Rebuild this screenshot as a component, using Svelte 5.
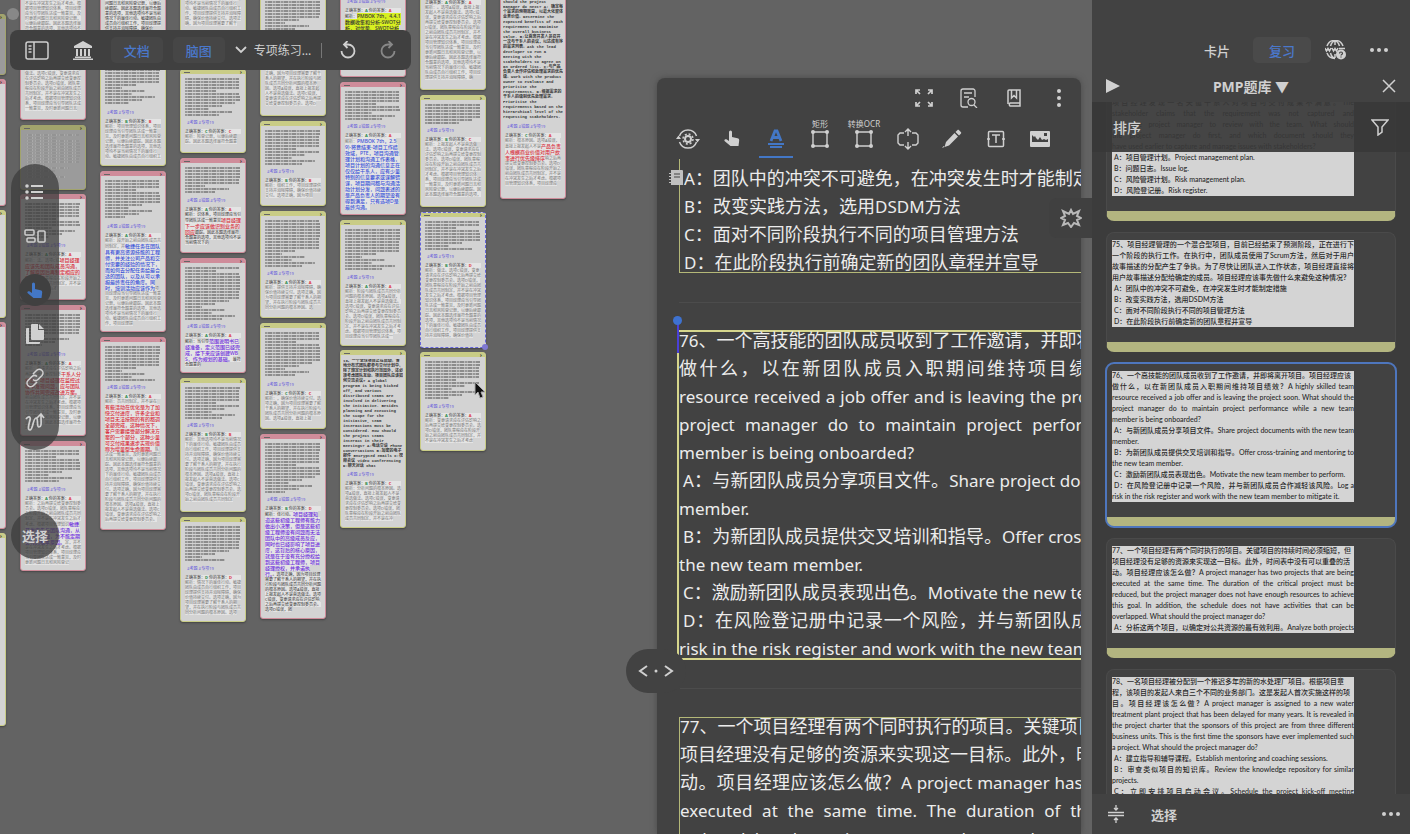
<script lang="ts">
	type Line = { text: string; fill?: boolean; option?: boolean };
	type Question = { id: number; lines: Line[] };
	type Node = {
		x: number;
		y: number;
		h: number;
		tone: string;
		sheet: number;
		wrong?: boolean;
		right?: string;
		mine?: string;
		mark?: string;
		color?: string;
		lead?: number;
		source?: string;
		dim?: boolean;
		selected?: boolean;
		strong?: boolean;
	};

	const questions: Question[] = [
		{
			id: 74,
			lines: [
				{ text: '项目经理发现一名关键干系人对项目可交付成果不满意。The', fill: true },
				{ text: 'stakeholder claims that the requirement was not captured and', fill: true },
				{ text: 'asks the project manager to review with the team. What should', fill: true },
				{ text: 'the project manager do first, and which document should they', fill: true },
				{ text: 'have used earlier to capture and manage issues with stakeholders?' },
				{ text: 'A：项目管理计划。Project management plan.', option: true },
				{ text: 'B：问题日志。Issue log.', option: true },
				{ text: 'C：风险管理计划。Risk management plan.', option: true },
				{ text: 'D：风险登记册。Risk register.', option: true }
			]
		},
		{
			id: 75,
			lines: [
				{ text: '75、项目经理管理的一个混合型项目，目前已经结束了预测阶段，正在进行下', fill: true },
				{ text: '一个阶段的执行工作。在执行中，团队成员使用了Scrum方法，然后对于用户', fill: true },
				{ text: '故事描述的分配产生了争执。为了尽快让团队进入工作状态，项目经理直接将', fill: true },
				{ text: '用户故事描述分配给确定的成员。项目经理应该事先做什么来避免这种情况？' },
				{ text: 'A：团队中的冲突不可避免，在冲突发生时才能制定措施', option: true },
				{ text: 'B：改变实践方法，选用DSDM方法', option: true },
				{ text: 'C：面对不同阶段执行不同的项目管理方法', option: true },
				{ text: 'D：在此阶段执行前确定新的团队章程并宣导', option: true }
			]
		},
		{
			id: 76,
			lines: [
				{ text: '76、一个高技能的团队成员收到了工作邀请，并即将离开项目。项目经理应该' },
				{ text: '做什么，以在新团队成员入职期间维持项目绩效？A highly skilled team', fill: true },
				{ text: 'resource received a job offer and is leaving the project soon. What should the', fill: true },
				{ text: 'project manager do to maintain project performance while a new team', fill: true },
				{ text: 'member is being onboarded?' },
				{ text: 'A：与新团队成员分享项目文件。Share project documents with the new team', fill: true, option: true },
				{ text: 'member.' },
				{ text: 'B：为新团队成员提供交叉培训和指导。Offer cross-training and mentoring to', fill: true, option: true },
				{ text: 'the new team member.' },
				{ text: 'C：激励新团队成员表现出色。Motivate the new team member to perform.', option: true },
				{ text: 'D：在风险登记册中记录一个风险，并与新团队成员合作减轻该风险。Log a', fill: true, option: true },
				{ text: 'risk in the risk register and work with the new team member to mitigate it.' }
			]
		},
		{
			id: 77,
			lines: [
				{ text: '77、一个项目经理有两个同时执行的项目。关键项目的持续时间必须缩短，但' },
				{ text: '项目经理没有足够的资源来实现这一目标。此外，时间表中没有可以重叠的活' },
				{ text: '动。项目经理应该怎么做？A project manager has two projects that are being', fill: true },
				{ text: 'executed at the same time. The duration of the critical project must be', fill: true },
				{ text: 'reduced, but the project manager does not have enough resources to achieve', fill: true },
				{ text: 'this goal. In addition, the schedule does not have activities that can be', fill: true },
				{ text: 'overlapped. What should the project manager do?' },
				{ text: 'A：分析这两个项目，以确定对公共资源的最有效利用。Analyze both projects', fill: true, option: true }
			]
		},
		{
			id: 78,
			lines: [
				{ text: '78、一名项目经理被分配到一个推迟多年的新的水处理厂项目。根据项目章' },
				{ text: '程，该项目的发起人来自三个不同的业务部门。这是发起人首次实施这样的项' },
				{ text: '目。项目经理该怎么做？A project manager is assigned to a new water', fill: true },
				{ text: 'treatment plant project that has been delayed for many years. It is revealed in', fill: true },
				{ text: 'the project charter that the sponsors of this project are from three different', fill: true },
				{ text: 'business units. This is the first time the sponsors have ever implemented such', fill: true },
				{ text: 'a project. What should the project manager do?' },
				{ text: 'A：建立指导和辅导课程。Establish mentoring and coaching sessions.', option: true },
				{ text: 'B：审查类似项目的知识库。Review the knowledge repository for similar', fill: true, option: true },
				{ text: 'projects.' },
				{ text: 'C：立即安排项目启动会议。Schedule the project kick-off meeting', fill: true, option: true }
			]
		}
	];

	const pages: Question[] = [
		{ id: 75, lines: questions[1].lines.slice(3) },
		questions[2],
		{ id: 77, lines: questions[3].lines.slice(0, 5) }
	];

	const note =
		'选项正确，因为项目经理需要了解干系人的期望，并在执行阶段与团队成员共同分析问题的根本原因。选项A错误，直接上报发起人不是首选做法。选项C错误，变更请求应在评估影响之后再提交给变更控制委员会。选项D错误，团队章程应在阶段开始之前由团队成员共同制定，并不是在冲突发生之后才考虑。根据项目管理知识体系，项目经理应当引导团队达成一致意见，及时更新问题日志和风险登记册，以便后续跟踪。因此本题选择最符合题意的选项，其他选项均不是当前情况下的最佳行动。敏捷团队由成员自行组织工作，项目经理提供支持并消除障碍，确保价值持续交付。';
	const longNote = note + note + note + note;

	const sourceOne =
		'should the project manager do next? A: 确定每个需求的预期效益，以最大化整体业务价值。Determine the expected benefits of each requirement to maximise the overall business value. B:让首席开发人员召开一次与干系人的会议，以达成有序的需求列表。Ask the lead developer to run a meeting with the stakeholders to agree on an ordered list. C:与产品负责人合作评估和处理需求的优先级。Work with the product owner to evaluate and prioritise the requirements. D:根据需求的干系人的级别优先处理需求。Prioritise the requirements based on the hierarchical level of the requesting stakeholders.';
	const sourceTwo =
		'19、一个全球项目正在启动。各地分布式团队都参与交付计划中。除了规定计划和执行范围外，还必须考虑团队互动。项目团队应该如何交流会议? A global program is being kicked off, and various distributed teams are involved in delivering the initiative. Besides planning and executing the scope for the initiative, team interactions must be considered. How should the project teams interact in their meetings? A:电话交谈 Phone conversations B:加密的电子邮件 Encrypted emails C:视频会议 Video conferencing D:聊天对话 Chat conversations';

	const nodes: Node[] = [
		{ x: -60, y: 14, h: 61, tone: 'green', sheet: 40, dim: true },
		{ x: -60, y: 79, h: 127, tone: 'pink', sheet: 110, dim: false },
		{ x: -60, y: 210, h: 108, tone: 'green', sheet: 90 },
		{ x: -60, y: 322, h: 207, tone: 'pink', sheet: 190 },
		{ x: -60, y: 533, h: 193, tone: 'green', sheet: 180 },
		{ x: 20, y: -60, h: 180, tone: 'pink', sheet: 20 },
		{ x: 20, y: 125, h: 65, tone: 'green', sheet: 46, dim: true },
		{ x: 20, y: 194, h: 106, tone: 'pink', sheet: 37, wrong: true, lead: 6, mark: '项目经理应该先和团队成员沟通，了解原因后再制定相应的解决方案', color: 'red' },
		{ x: 20, y: 305, h: 131, tone: 'pink', sheet: 35, wrong: true, lead: 20, mark: '干系人分析后，项目经理在监控过程中发现问题，应与团队协作共同完成改进方案。', color: 'red' },
		{ x: 20, y: 441, h: 130, tone: 'pink', sheet: 34, wrong: true, lead: 64, mark: '敏捷开发应先与团队沟通，从而发现问题，为不能定期交付的根本原因。', color: 'purple' },
		{ x: 100, y: -60, h: 100, tone: 'pink', sheet: 20, strong: true },
		{ x: 100, y: 45, h: 121, tone: 'green', sheet: 53, right: 'B', mine: 'B' },
		{ x: 100, y: 171, h: 161, tone: 'pink', sheet: 41, wrong: true, lead: 16, mark: '敏捷任务在团队具有更高资源技能的工程师，并关注公司产品和交付需要的经验的情况下，而如何去分配任务给最合适的团队，以及从可以承担最终责任的角度。同时，培训活动应该作为', color: 'blue' },
		{ x: 100, y: 337, h: 193, tone: 'pink', sheet: 36, wrong: true, lead: 10, mark: '有些活动在优化是为了加快交付进度，许多企业和项目无法按照的有的都调全部完成，这种情况下，客户需要接受部分解决方案的一个部分，这种少量可交付成果逐步实现价值称为增量型生命周期。', color: 'red' },
		{ x: 180, y: -60, h: 95, tone: 'green', sheet: 20 },
		{ x: 180, y: 69, h: 84, tone: 'green', sheet: 39, right: 'C', mine: 'C' },
		{ x: 180, y: 158, h: 95, tone: 'pink', sheet: 28, wrong: true, strong: true, lead: 20, mark: '项目经理下一步应该做识别业务的回应', color: 'red' },
		{ x: 180, y: 258, h: 115, tone: 'pink', sheet: 54, wrong: true, strong: true, lead: 3, mark: '范围说明书已经准备，定义范围已经完成，接下来应该创建WBS，作为规划的基础。', color: 'purple' },
		{ x: 180, y: 378, h: 134, tone: 'green', sheet: 33, right: 'B', mine: 'B' },
		{ x: 180, y: 517, h: 105, tone: 'green', sheet: 37, right: 'D', mine: 'D' },
		{ x: 260, y: -20, h: 136, tone: 'green', sheet: 50 },
		{ x: 260, y: 121, h: 85, tone: 'green', sheet: 36, right: 'B', mine: 'B' },
		{ x: 260, y: 211, h: 107, tone: 'green', sheet: 48 },
		{ x: 260, y: 323, h: 106, tone: 'green', sheet: 47, right: 'C', mine: 'C' },
		{ x: 260, y: 434, h: 185, tone: 'pink', sheet: 51, wrong: true, strong: true, right: 'B', mine: 'D', lead: 4, mark: '项目经理知道这些初级工程师有能力做出小决策，但是这些初级工程师没有问题而无法团队中的高级成员反应，同时也已经影响了项目进度，这背后的核心原因，就是在于没有充分授权给到这些初级工程师，项目经理授权，并承诺执行。', color: 'purple' },
		{ x: 340, y: -50, h: 127, tone: 'pink', sheet: 37, wrong: true, strong: true, mark: 'PMBOK 7th，4.4.1 数据收集和分析-SWOT分析，对优势、SWOT分析的是一个', color: 'yellow' },
		{ x: 340, y: 82, h: 133, tone: 'pink', sheet: 30, wrong: true, mark: 'PMBOK 7th，2.5 9)-将意结束-项目工作绩效域，PTE，项目沟通管理计划和沟通工作表格，项目计划的沟通信息正在仅仅给干系人，应有少量特别的信息要求或误解错误，项目期间都与沟通活动计划分发，问题表述的是产品负责人的期望没有得到满足，只有选项D是最终沟通。', color: 'blue' },
		{ x: 340, y: 220, h: 126, tone: 'green', sheet: 43 },
		{ x: 340, y: 350, h: 178, tone: 'green', sheet: 110, source: sourceTwo, right: 'B', mine: 'C' },
		{ x: 420, y: -50, h: 140, tone: 'green', sheet: 29 },
		{ x: 420, y: 95, h: 112, tone: 'green', sheet: 21, right: 'B', mine: 'C' },
		{ x: 420, y: 212, h: 136, tone: 'green', sheet: 30, right: 'B', mine: 'D', selected: true },
		{ x: 420, y: 352, h: 99, tone: 'green', sheet: 40 },
		{ x: 500, y: -9, h: 208, tone: 'pink', sheet: 121, source: sourceOne, wrong: true, right: 'C', mine: 'A', lead: 20, mark: '产品负责人根据商业价值对用户故事进行优先级排序', color: 'red' }
	];

	function stripes(node: Node, index: number): number[] {
		const count = Math.floor(node.sheet / 3);
		return Array.from({ length: count }, (_, row) => {
			const seed = (row * 7 + index * 5) % 11;
			if (row > count * 0.6) return 30 + seed * 6;
			return seed === 4 ? 55 : 96 + (seed % 4);
		});
	}

	// plain note text that still fits under the excerpt and the highlighted part
	function remainder(node: Node, index: number): string {
		const marked = Math.ceil((node.mark?.length ?? 0) / 11) * 6;
		const rows = Math.floor((node.h - node.sheet - 32 - marked) / 5);
		const length = Math.max(0, rows * 14 - (node.lead ?? 0) - 5);
		return longNote.slice(index * 9 + 40, index * 9 + 40 + length);
	}

	// Latin runs are set a step smaller than the Chinese around them
	function runs(text: string) {
		return text
			.split(/([\x20-\x7e]+)/)
			.filter(Boolean)
			.map((part) => ({ part, latin: /^[\x20-\x7e]/.test(part) }));
	}

	let selectedCard = $state(76);
	let tab = $state('复习');
</script>

{#snippet dots(vertical: boolean)}
	<svg width="20" height="20" viewBox="0 0 20 20" fill="currentColor">
		{#if vertical}
			<circle cx="10" cy="3" r="2" /><circle cx="10" cy="10" r="2" /><circle cx="10" cy="17" r="2" />
		{:else}
			<circle cx="3" cy="10" r="2" /><circle cx="10" cy="10" r="2" /><circle cx="17" cy="10" r="2" />
		{/if}
	</svg>
{/snippet}

{#snippet frame()}
	<svg width="20" height="20" viewBox="0 0 20 20" fill="none" stroke="currentColor" stroke-width="1.4">
		<path d="M3 3h14v14H3z" />
		<g fill="currentColor" stroke="none">
			<circle cx="3" cy="3" r="2" /><circle cx="17" cy="3" r="2" />
			<circle cx="3" cy="17" r="2" /><circle cx="17" cy="17" r="2" />
		</g>
	</svg>
{/snippet}

{#snippet hand()}
	<svg width="16" height="17" viewBox="0 0 16 17" fill="currentColor">
		<path d="M5 2a1.500 1.500 0 0 1 3 0v5l5.500 1.200c1.300.3 1.800 1 1.700 2.200L14.500 16H6.500L.8 11.200c-.7-.7-.5-1.400.2-1.800.6-.3 1.200-.2 1.800.2L5 11z" />
	</svg>
{/snippet}

<div class="app">
	<main class="canvas">
		{#each nodes as node, i}
			<article
				class="node {node.tone}"
				class:dim={node.dim}
				class:selected={node.selected}
				style="left: {node.x}px; top: {node.y}px; height: {node.h}px"
			>
				<div class="node-bar"><i></i><b>›</b></div>
				<div class="sheet" class:typed={node.source} style="height: {node.sheet}px">
					{#if node.source}
						{node.source}
					{:else}
						{#each stripes(node, i) as width}
							<span style="width: {width}%"></span>
						{/each}
					{/if}
				</div>
				{#if !node.dim && node.x >= 0}
					<div class="tags">#考题 {node.wrong ? '#错题 ' : ''}#专项19</div>
					<div class="answer">
						正确答案：<em class="ok">{node.right ?? 'A'}</em> 你的答案：<em>{node.mine ?? 'A'}</em>
					</div>
					<div class="note" class:strong={node.strong}>
						<span>解析：{longNote.slice(i * 9, i * 9 + (node.lead ?? 0))}</span>{#if node.mark}<mark class={node.color}>{node.mark}</mark>{/if}<span>{remainder(node, i)}</span>
					</div>
				{/if}
				{#if node.selected}<div class="node-grip"></div>{/if}
			</article>
		{/each}

		<span class="window-dot"></span>

		<nav class="top-bar">
			<div class="group wide">
				<button aria-label="侧边栏">
					<svg width="24" height="19" viewBox="0 0 24 19" fill="none" stroke="currentColor" stroke-width="1.500">
						<rect x="1" y="1" width="22" height="17" rx="2" /><path d="M9 1v17M3.500 5h3M3.500 8h3M3.500 11h3" />
					</svg>
				</button>
				<button aria-label="图书馆">
					<svg width="20" height="19" viewBox="0 0 20 19" fill="currentColor">
						<path d="M10 0 1 5v2h18V5zM3 8h2v7H3zM7 8h2v7H7zM11 8h2v7h-2zM15 8h2v7h-2zM2 15.500h16V17H2zM0 17.500h20V19H0z" />
					</svg>
				</button>
			</div>
			<div class="group">
				<button class="mode">文档</button>
				<button class="mode">脑图</button>
				<button class="title">
					<svg width="12" height="8" viewBox="0 0 12 8" fill="none" stroke="currentColor" stroke-width="1.800"><path d="m1 1 5 5 5-5" /></svg>
					专项练习…
				</button>
				<span class="rule"></span>
			</div>
			<div class="group wide">
				<button aria-label="撤销">
					<svg width="16" height="18" viewBox="0 0 16 18" fill="none" stroke="currentColor" stroke-width="1.800">
						<path d="M1.500 10a6.500 6.500 0 1 0 6.500-6.500H4M7.500 0 4 3.500 7.500 7" />
					</svg>
				</button>
				<button aria-label="重做" class="faded">
					<svg width="16" height="18" viewBox="0 0 16 18" fill="none" stroke="currentColor" stroke-width="1.800">
						<path d="M14.500 10A6.500 6.500 0 1 1 8 3.500h4M8.500 0 12 3.500 8.500 7" />
					</svg>
				</button>
			</div>
		</nav>

		<nav class="side-tools">
			<button aria-label="大纲">
				<svg width="20" height="16" viewBox="0 0 20 16" fill="currentColor">
					<circle cx="2" cy="2" r="1.800" /><circle cx="2" cy="8" r="1.800" /><circle cx="2" cy="14" r="1.800" />
					<path d="M6 1h12v2H6zM6 7h12v2H6zM6 13h12v2H6z" />
				</svg>
			</button>
			<button aria-label="布局">
				<svg width="22" height="14" viewBox="0 0 22 14" fill="none" stroke="currentColor" stroke-width="1.500">
					<rect x="1" y="1" width="9" height="5" rx="1" /><rect x="3" y="9" width="8" height="4" rx="1" /><rect x="14" y="2" width="7" height="11" rx="1" />
				</svg>
			</button>
			<button aria-label="手型" class="active">{@render hand()}</button>
			<button aria-label="复制">
				<svg width="18" height="20" viewBox="0 0 18 20" fill="currentColor">
					<path d="M6 0h6v6h6v9a1 1 0 0 1-1 1H6a1 1 0 0 1-1-1V1a1 1 0 0 1 1-1zM13 0l5 5h-5zM1 4h2v14h11v1a1 1 0 0 1-1 1H1a1 1 0 0 1-1-1V5a1 1 0 0 1 1-1z" />
				</svg>
			</button>
			<button aria-label="链接">
				<svg width="20" height="20" viewBox="0 0 20 20" fill="none" stroke="currentColor" stroke-width="1.600">
					<path d="m8 6 3.500-3.500a3.600 3.600 0 0 1 5.500 5L13 11.500a3.600 3.600 0 0 1-5 0M12 14l-3.500 3.500a3.600 3.600 0 0 1-5.500-5L7 8.500a3.600 3.600 0 0 1 5 0" />
				</svg>
			</button>
			<button aria-label="手写">
				<svg width="20" height="20" viewBox="0 0 20 20" fill="none" stroke="currentColor" stroke-width="1.700">
					<path d="M1 7c2-3 5-3 4 1S2 18 5 18s3-12 6-12 0 9 3 9 2-5 2-11M12 6l4-4 3 4" />
				</svg>
			</button>
		</nav>
		<button class="pick">选择</button>

		<section class="reader">
			<header class="reader-head">
				<div class="reader-actions">
					<button aria-label="全屏">
						<svg width="18" height="18" viewBox="0 0 18 18" fill="none" stroke="currentColor" stroke-width="1.700">
							<path d="M5 1H1v4M1 1l4 4M13 1h4v4M17 1l-4 4M5 17H1v-4M1 17l4-4M13 17h4v-4M17 17l-4-4" />
						</svg>
					</button>
					<button aria-label="查找">
						<svg width="18" height="20" viewBox="0 0 18 20" fill="none" stroke="currentColor" stroke-width="1.300">
							<path d="M15 9V3a2 2 0 0 0-2-2H3a2 2 0 0 0-2 2v14a2 2 0 0 0 2 2h5M4 5h8M4 9h5" /><circle cx="11.500" cy="14" r="3.500" /><path d="m14 17 3 3" />
						</svg>
					</button>
					<button aria-label="书签">
						<svg width="14" height="18" viewBox="0 0 14 18" fill="none" stroke="currentColor" stroke-width="1.500">
							<path d="M13 14H3a2 2 0 0 0 0 3h10V1H2a1 1 0 0 0-1 1v13M4.500 1v8L7 6.500 9.500 9V1" />
						</svg>
					</button>
					<button aria-label="更多">{@render dots(true)}</button>
				</div>
				<div class="reader-tools">
					<button aria-label="设置">
						<svg width="24" height="22" viewBox="0 0 24 22" fill="none" stroke="currentColor" stroke-width="1.500">
							<path d="M3.500 8a9 9 0 0 1 17 0M20.500 14a9 9 0 0 1-17 0" />
							<circle cx="12" cy="11" r="3" stroke-width="2" />
							<circle cx="12" cy="11" r="5" stroke-width="1.500" stroke-dasharray="2 1.930" />
							<path d="m0 11 2.500-3.500L5 11zM19 11l2.500 3.500L24 11z" fill="currentColor" stroke="none" />
						</svg>
					</button>
					<button aria-label="手">{@render hand()}</button>
					<button aria-label="高亮" class="current">
						<svg width="18" height="20" viewBox="0 0 18 20" fill="none" stroke="currentColor">
							<path d="m4 12 4-10h2l4 10M6 8.500h6" stroke-width="2.800" /><path d="M1 15h16M3 18h12" stroke-width="1.800" />
						</svg>
					</button>
					<button><small>矩形</small>{@render frame()}</button>
					<button><small>转换OCR</small>{@render frame()}</button>
					<button aria-label="扩展">
						<svg width="22" height="22" viewBox="0 0 22 22" fill="none" stroke="currentColor" stroke-width="1.400">
							<path d="M7 5H3L1 7v8l2 2h4M15 5h4l2 2v8l-2 2h-4M11 1v7M11 14v7M8 4l3-3 3 3M8 18l3 3 3-3" />
						</svg>
					</button>
					<button aria-label="画笔">
						<svg width="20" height="20" viewBox="0 0 20 20" fill="currentColor"><path d="m12.500 4 3.500 3.500-9 9-4.500 1.500L4 13zM13.500 3l1.800-1.800c.6-.6 1.200-.6 1.800 0l1.700 1.700c.6.6.6 1.200 0 1.800L17 6.500zM0 19l1.500-2 1 1z" /></svg>
					</button>
					<button aria-label="文本">
						<svg width="18" height="18" viewBox="0 0 18 18" fill="none" stroke="currentColor" stroke-width="1.500">
							<rect x="1.500" y="1.500" width="15" height="15" rx="1" /><path d="M5 5h8M9 5v8M0 9h3M15 9h3" />
						</svg>
					</button>
					<button aria-label="图片">
						<svg width="20" height="16" viewBox="0 0 20 16" fill="currentColor" fill-rule="evenodd">
							<path d="M1 0h18a1 1 0 0 1 1 1v14a1 1 0 0 1-1 1H1a1 1 0 0 1-1-1V1a1 1 0 0 1 1-1zM2 4v7h16V8l-2 1-2-1-2 1-2-3-2 3-2-2-1-2-1 1zM14 2v3h3V2z" />
						</svg>
					</button>
				</div>
			</header>
			<div class="page">
				{#each pages as page (page.id)}
					<div class="passage" class:highlighted={page.id === 76}>
						<div class="passage-text">
							{#each page.lines as line}
								<p class:fill={line.fill} class:option={line.option}>{#each runs(line.text) as run}{#if run.latin}<span>{run.part}</span>{:else}{run.part}{/if}{/each}</p>
							{/each}
						</div>
					</div>
				{/each}
			</div>
			<span class="handle"></span>
			<svg class="note-mark" width="14" height="16" viewBox="0 0 14 16" fill="currentColor">
				<path d="M2 0h11a1 1 0 0 1 1 1v14H2v-2H0v-1h2v-2H0V9h2V7H0V6h2V4H0V3h2z" /><path d="M5 4h6M5 7h6" stroke="#424242" stroke-width="1.200" />
			</svg>
			<button class="splitter" aria-label="调整宽度">
				<svg width="36" height="14" viewBox="0 0 36 14" fill="none" stroke="currentColor" stroke-width="2">
					<path d="M9 2 2 7l7 5M27 2l7 5-7 5" /><circle cx="18" cy="7" r="1.500" fill="currentColor" stroke="none" />
				</svg>
			</button>
			<button class="star" aria-label="AI">
				<svg width="22" height="20" viewBox="0 0 22 20" fill="none" stroke="currentColor" stroke-width="2">
					<path d="m11 2 2 4 6-3-2 5 4 2-4 2 2 5-5-2-3 4-3-4-5 2 2-5-4-2 4-2-2-5 6 3z" />
				</svg>
			</button>
		</section>

		<svg class="cursor" width="12" height="18" viewBox="0 0 12 18"><path d="M1 1v13l3-3 2 6 3-1-2-5h4z" fill="#111" stroke="#aaa" /></svg>
	</main>

	<aside class="panel">
		<header class="panel-tabs">
			<button class:on={tab === '卡片'} onclick={() => (tab = '卡片')}>卡片</button>
			<button class:on={tab === '复习'} onclick={() => (tab = '复习')}>复习</button>
			<button class="plain" aria-label="网页">
				<svg width="22" height="20" viewBox="0 0 22 20" fill="none" stroke="currentColor" stroke-width="1.500">
					<path d="M2 6a8.500 8.500 0 0 1 16 0M2 13a8.500 8.500 0 0 0 8 5.500M10 1v4M10 14v4M5.500 6c1-3 2.500-5 4.500-5s3.500 2 4.500 5M5.500 13c.8 3 2.500 5 4.500 5M0 8l1.500 3L3 8.500 4.500 11 6 8M7 8l1.500 3L10 8.500l1.500 2.500L13 8M14 8.500h6" />
					<circle cx="16" cy="14.500" r="5" fill="currentColor" stroke="none" />
					<path d="M14.500 13.500c0-2 3-2 3 0 0 1-1.500 1-1.500 2M16 16.500v1" stroke="#424242" stroke-width="1.200" />
				</svg>
			</button>
			<button class="plain" aria-label="更多">{@render dots(false)}</button>
		</header>
		<div class="panel-title">
			<button aria-label="播放"><svg width="14" height="14" viewBox="0 0 14 14" fill="currentColor"><path d="M0 0v14l14-7z" /></svg></button>
			<button class="deck">PMP题库 ▼</button>
			<button aria-label="关闭"><svg width="14" height="14" viewBox="0 0 14 14" stroke="currentColor" stroke-width="1.500"><path d="m1 1 12 12M13 1 1 13" /></svg></button>
		</div>
		<div class="deck-list">
			<div class="sort-bar">
				<span>排序</span>
				<button aria-label="筛选">
					<svg width="18" height="18" viewBox="0 0 18 18" fill="none" stroke="currentColor" stroke-width="1.500"><path d="M1 2h16l-6 7v5l-4 3V9z" /></svg>
				</button>
			</div>
			<div class="cards">
				{#each questions as question (question.id)}
					<!-- svelte-ignore a11y_click_events_have_key_events, a11y_no_static_element_interactions -->
					<div class="card" class:chosen={question.id === selectedCard} onclick={() => (selectedCard = question.id)}>
						<div class="clip">
							<div class="clip-text">
								{#each question.lines as line}
									<p class:fill={line.fill} class:option={line.option}>{line.text}</p>
								{/each}
							</div>
						</div>
					</div>
				{/each}
			</div>
		</div>
		<footer class="panel-foot">
			<button aria-label="折叠">
				<svg width="16" height="18" viewBox="0 0 16 18" fill="none" stroke="currentColor" stroke-width="1.300"><path d="M0 7.500h16M0 10.500h16M8 0v5M6 3l2 2 2-2M8 18v-5M6 15l2-2 2 2" /></svg>
			</button>
			<button class="select">选择</button>
			<button aria-label="更多">{@render dots(false)}</button>
		</footer>
	</aside>
</div>

<style>
	:global(body) {
		margin: 0;
		background: #636363;
	}

	.app {
		display: flex;
		height: 100vh;
		overflow: hidden;
		color: #d0d0d0;
		font-family: 'Noto Sans', 'Noto Sans CJK SC', sans-serif;
		font-size: 14px;
	}

	button {
		display: flex;
		align-items: center;
		justify-content: center;
		padding: 0;
		border: 0;
		background: none;
		color: inherit;
		font: inherit;
		cursor: pointer;
	}

	p {
		margin: 0;
	}

	.canvas {
		position: relative;
		flex: 1;
		overflow: hidden;
		background: #636363;
	}

	/* mind map nodes */
	.node {
		--tone: #c9cc86;
		position: absolute;
		box-sizing: border-box;
		width: 66px;
		overflow: hidden;
		border: 1px solid var(--tone);
		border-radius: 3px;
		background: #d3d3d3;
		box-shadow: 0 1px 2px #444;
		color: #777;
		font-size: 4px;
		line-height: 5px;
	}

	.node.pink {
		--tone: #cf8c9a;
	}

	.node.dim {
		--tone: #a2a46c;
		background: #9b9b9b;
	}

	.node.selected {
		overflow: visible;
		border: 1px dashed #6666dd;
	}

	.node-bar {
		display: flex;
		align-items: center;
		justify-content: space-between;
		height: 4px;
		padding: 0 3px;
		background: var(--tone);
		color: #333;
		line-height: 4px;
	}

	.node-bar i {
		width: 6px;
		height: 1px;
		background: #666;
	}

	.node-bar b {
		font-size: 6px;
	}

	.sheet {
		margin: 4px 4px 3px;
		overflow: hidden;
	}

	.sheet.typed {
		margin: 4px 2px 3px;
		color: #333;
		font-family: 'Liberation Mono', 'Noto Sans CJK SC', monospace;
		font-weight: 700;
	}

	.sheet span {
		display: block;
		height: 2px;
		margin-bottom: 1px;
		background: repeating-linear-gradient(90deg, #989898 0 2px, #b0b0b0 2px 3px, #8c8c8c 3px 7px, #bababa 7px 8px);
	}

	.dim .sheet span {
		opacity: 0.5;
	}

	.tags {
		padding-left: 6px;
		margin-bottom: 3px;
		color: #6658dc;
		line-height: 6px;
	}

	.answer {
		padding: 0 4px;
		color: #333;
		white-space: nowrap;
	}

	.answer em {
		color: #d34;
		font-style: normal;
		font-weight: 700;
	}

	.answer .ok {
		color: #298a4a;
	}

	.note {
		padding: 0 4px;
		word-break: break-all;
	}

	.note span,
	.answer {
		background-color: #e4e4e4;
		background-clip: content-box;
	}

	.note.strong {
		color: #333;
	}

	.note mark {
		background: #e4e4e4;
		color: #d83040;
		font-size: 5px;
		font-weight: 500;
		line-height: 6px;
	}

	.note .blue {
		color: #3a52d8;
	}

	.note .purple {
		color: #7030dc;
	}

	.note .yellow {
		background: #d8f020;
		color: #333;
	}

	.node-grip {
		position: absolute;
		right: -3px;
		bottom: -3px;
		width: 6px;
		height: 6px;
		border-radius: 50%;
		background: #7f78d2;
	}

	.window-dot {
		position: absolute;
		top: 8px;
		left: 7px;
		width: 12px;
		height: 12px;
		border-radius: 50%;
		background: #888;
	}

	.top-bar {
		position: absolute;
		top: 30px;
		left: 10px;
		display: flex;
		align-items: center;
		justify-content: space-between;
		box-sizing: border-box;
		width: 401px;
		height: 40px;
		padding: 0 15px;
		border-radius: 8px;
		background: #404040;
	}

	.group {
		display: flex;
		align-items: center;
		gap: 10px;
	}

	.group.wide {
		gap: 24px;
	}

	.mode {
		width: 52px;
		height: 26px;
		border-radius: 5px;
		background: #464646;
		color: #4a78cc;
		font-size: 13px;
		font-weight: 500;
	}

	.title {
		gap: 7px;
		font-size: 12px;
	}

	.rule {
		width: 1px;
		height: 15px;
		background: #777;
	}

	.faded {
		color: #888;
	}

	.side-tools {
		position: absolute;
		top: 164px;
		left: 11px;
		display: flex;
		flex-direction: column;
		align-items: center;
		box-sizing: border-box;
		width: 48px;
		height: 286px;
		padding: 12px 0;
		gap: 12px;
		border-radius: 24px;
		background: rgba(60, 60, 60, 0.75);
	}

	.side-tools button {
		width: 32px;
		height: 32px;
	}

	.side-tools .active {
		margin-top: 10px;
		border-radius: 50%;
		background: #404040;
		color: #4377c6;
	}

	.pick {
		position: absolute;
		top: 511px;
		left: 11px;
		width: 48px;
		height: 48px;
		border-radius: 50%;
		background: rgba(60, 60, 60, 0.75);
		font-size: 13px;
		font-weight: 700;
	}

	/* document reader */
	.reader {
		position: absolute;
		top: 78px;
		right: 11px;
		bottom: 0;
		display: flex;
		flex-direction: column;
		width: 424px;
		border-radius: 8px 8px 0 0;
		background: #424242;
		box-shadow: 0 0 6px #4a4a4a;
	}

	.reader-head {
		flex: none;
		height: 81px;
	}

	.reader-actions {
		display: flex;
		justify-content: flex-end;
		height: 40px;
	}

	.reader-actions button {
		width: 45px;
	}

	.reader-tools {
		display: flex;
		height: 41px;
		padding-left: 9px;
	}

	.reader-tools button {
		position: relative;
		width: 44px;
	}

	.reader-tools small {
		position: absolute;
		top: 0;
		font-size: 8px;
		line-height: 12px;
		white-space: nowrap;
	}

	.reader-tools .current {
		color: #4377c6;
	}

	.reader-tools .current::after {
		content: '';
		position: absolute;
		right: 5px;
		bottom: 1px;
		left: 5px;
		height: 2px;
		background: #4377c6;
	}

	.page {
		flex: 1;
		min-height: 0;
		overflow: hidden;
		padding-left: 22px;
	}

	.passage {
		width: 624px;
		border: 1px solid #b4b878;
		color: #ececec;
		font-family: 'Noto Sans CJK SC', sans-serif;
		font-size: 18px;
		line-height: 28px;
	}

	.passage:first-child {
		margin-top: -18px;
	}

	.passage.highlighted {
		border: 2px solid #d6d68c;
		margin-left: -2px;
	}

	/* faint separator halfway between passages */
	.passage + .passage {
		position: relative;
		margin-top: 57px;
	}

	.passage + .passage::before {
		content: '';
		position: absolute;
		top: -30px;
		right: 0;
		left: 0;
		height: 1px;
		background: #4c4c4c;
	}

	.passage-text {
		display: flow-root;
		margin: -7px 0 -3px;
	}

	.passage p {
		height: 28px;
		white-space: nowrap;
	}

	.passage span {
		font-family: 'Noto Sans', sans-serif;
		font-size: 17px;
	}

	.fill {
		text-align: justify;
		text-align-last: justify;
	}

	.passage .option {
		padding-left: 4px;
	}

	.handle {
		position: absolute;
		top: 246px;
		left: 20px;
		width: 2px;
		height: 29px;
		background: #4a40d8;
	}

	.handle::before {
		content: '';
		position: absolute;
		top: -8px;
		left: -4px;
		width: 9px;
		height: 9px;
		border-radius: 50%;
		background: #3e72d0;
	}

	.note-mark {
		position: absolute;
		top: 92px;
		left: 12px;
		color: #c0c0c0;
	}

	.splitter {
		position: absolute;
		top: 571px;
		left: -31px;
		width: 60px;
		height: 44px;
		border-radius: 22px;
		background: #424242;
	}

	.star {
		position: absolute;
		top: 120px;
		right: -11px;
		width: 43px;
		height: 40px;
		border-radius: 8px 0 0 8px;
		background: #404040;
		color: #b8b8b8;
	}

	.cursor {
		position: absolute;
		top: 381px;
		left: 474px;
	}

	/* review panel */
	.panel {
		display: flex;
		flex: none;
		flex-direction: column;
		width: 318px;
		background: #424242;
	}

	.panel-tabs {
		display: flex;
		flex: none;
		align-items: center;
		justify-content: flex-end;
		box-sizing: border-box;
		height: 70px;
		padding: 30px 21px 0 0;
		gap: 7px;
	}

	.panel-tabs button {
		width: 58px;
		height: 26px;
		border-radius: 5px;
		font-size: 13px;
		font-weight: 500;
	}

	.panel-tabs .on {
		background: #4a4a4a;
		color: #4a78cc;
	}

	.panel-tabs .plain {
		width: 36px;
	}

	.panel-tabs .plain:last-child {
		width: 20px;
		margin-left: 8px;
	}

	.panel-title {
		display: flex;
		flex: none;
		align-items: center;
		justify-content: space-between;
		height: 32px;
		padding: 0 14px;
	}

	.deck {
		font-weight: 700;
	}

	.deck-list {
		position: relative;
		flex: 1;
		min-height: 0;
		overflow: hidden;
		background: #3c3c3c;
	}

	.sort-bar {
		position: absolute;
		z-index: 1;
		top: 0;
		right: 0;
		left: 0;
		display: flex;
		align-items: center;
		justify-content: space-between;
		height: 50px;
		padding: 0 21px;
		background: rgba(56, 56, 56, 0.92);
		font-weight: 500;
	}

	.cards {
		display: flex;
		flex-direction: column;
		gap: 11px;
		padding: 0 14px;
	}

	.card {
		padding: 7px 0 15px 5px;
		border: 1px solid #4a4a4a;
		border-bottom: 10px solid #b3b580;
		border-radius: 8px;
		background: #424242;
	}

	.card:first-child {
		margin-top: -12px;
	}

	.card.chosen {
		outline: 2px solid #4e76bd;
		outline-offset: -1px;
	}

	.clip {
		width: 242px;
		overflow: hidden;
		background: #d4d4d4;
		color: #282828;
		font-family: Lato, 'Noto Sans CJK SC', sans-serif;
		font-size: 7px;
		font-weight: 500;
		line-height: 11px;
	}

	.clip-text {
		margin-top: -1px;
	}

	.clip p {
		height: 11px;
		white-space: nowrap;
	}

	.clip .option {
		padding-left: 2px;
	}

	.panel-foot {
		display: flex;
		flex: none;
		align-items: center;
		height: 40px;
		padding: 0 9px 0 16px;
		gap: 27px;
	}

	.select {
		font-size: 13px;
		font-weight: 700;
	}

	.panel-foot button:last-child {
		margin-left: auto;
	}
</style>
